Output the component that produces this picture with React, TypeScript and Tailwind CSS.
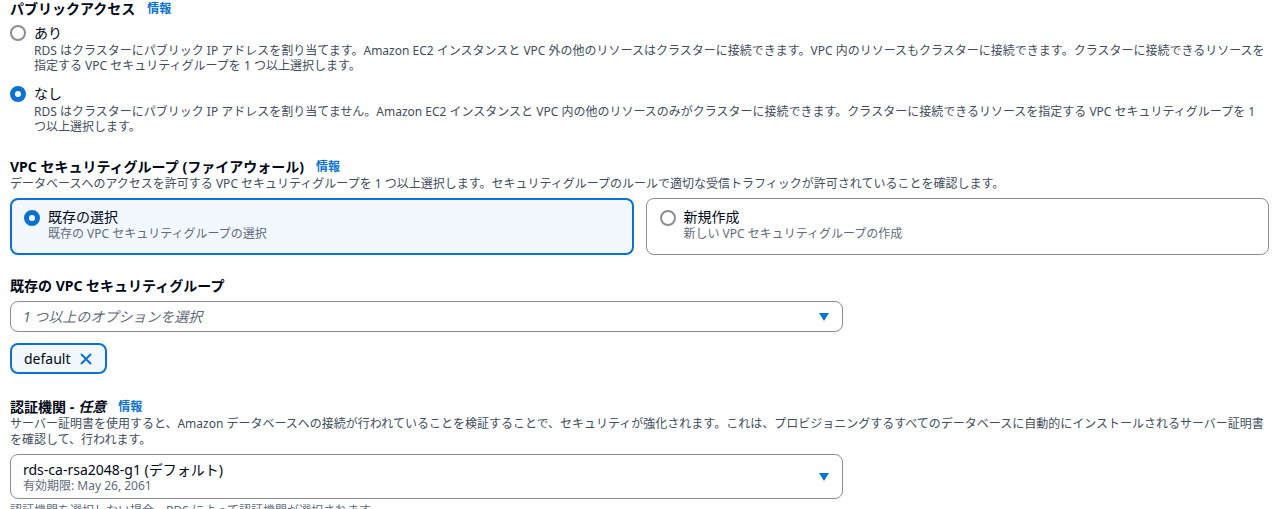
const F = { fontFamily: '"Noto Sans", "Noto Sans CJK JP", sans-serif' };

function Radio({ on }: { on?: boolean }) {
  return on ? (
    <span className="block w-4 h-4 rounded-full border-[5px] border-[#0972d3] bg-white shrink-0" />
  ) : (
    <span className="block w-4 h-4 rounded-full border-2 border-[#8c8c94] bg-white shrink-0" />
  );
}

function Info() {
  return <span className="text-[12px] font-bold text-[#0972d3] ml-3">情報</span>;
}

function Caret() {
  return (
    <svg width="12" height="10" viewBox="0 0 12 10" className="shrink-0">
      <path d="M1 1h10L6 9z" fill="#0972d3" />
    </svg>
  );
}

export default function App() {
  return (
    <div style={F} className="w-[1279px] h-[509px] overflow-hidden bg-white text-[#000716] px-[10px] pt-[1px]">
      <div className="text-[14px] font-bold leading-[16px] flex items-center">パブリックアクセス<Info /></div>
      <div className="mt-[7px] flex items-center gap-[8px] text-[14px] leading-[18px]"><Radio />あり</div>
      <div className="pl-[24px] mt-[1px] text-[12px] leading-[15px] text-[#414d5c]">
        RDS はクラスターにパブリック IP アドレスを割り当てます。Amazon EC2 インスタンスと VPC 外の他のリソースはクラスターに接続できます。VPC 内のリソースもクラスターに接続できます。クラスターに接続できるリソースを指定する VPC セキュリティグループを 1 つ以上選択します。
      </div>
      <div className="mt-[12px] flex items-center gap-[8px] text-[14px] leading-[18px]"><Radio on />なし</div>
      <div className="pl-[24px] mt-[1px] text-[12px] leading-[15px] text-[#414d5c]">
        RDS はクラスターにパブリック IP アドレスを割り当てません。Amazon EC2 インスタンスと VPC 内の他のリソースのみがクラスターに接続できます。クラスターに接続できるリソースを指定する VPC セキュリティグループを 1 つ以上選択します。
      </div>

      <div className="mt-[24px] text-[14px] font-bold leading-[18px] flex items-center">VPC セキュリティグループ (ファイアウォール)<Info /></div>
      <div className="text-[12px] leading-[16px] text-[#414d5c]">データベースへのアクセスを許可する VPC セキュリティグループを 1 つ以上選択します。セキュリティグループのルールで適切な受信トラフィックが許可されていることを確認します。</div>
      <div className="mt-[6px] grid grid-cols-2 gap-[12px] h-[57px]">
        <div className="rounded-[8px] border-2 border-[#0972d3] bg-[#f2f8fd] px-[12px] py-[8px] flex gap-[8px]">
          <div className="pt-[2px]"><Radio on /></div>
          <div>
            <div className="text-[14px] leading-[18px]">既存の選択</div>
            <div className="text-[12px] leading-[16px] text-[#5f6b7a]">既存の VPC セキュリティグループの選択</div>
          </div>
        </div>
        <div className="rounded-[8px] border border-[#8c8c94] px-[13px] py-[9px] flex gap-[8px]">
          <div className="pt-[2px]"><Radio /></div>
          <div>
            <div className="text-[14px] leading-[18px]">新規作成</div>
            <div className="text-[12px] leading-[16px] text-[#5f6b7a]">新しい VPC セキュリティグループの作成</div>
          </div>
        </div>
      </div>

      <div className="mt-[22px] text-[14px] font-bold leading-[18px]">既存の VPC セキュリティグループ</div>
      <div className="mt-[6px] w-[833px] h-[31px] rounded-[8px] border border-[#8c8c94] px-[12px] flex items-center justify-between">
        <span className="italic text-[14px] text-[#5f6b7a]">1 つ以上のオプションを選択</span>
        <Caret />
      </div>
      <div className="mt-[11px] inline-flex items-center gap-[8px] h-[31px] px-[12px] rounded-[8px] border-2 border-[#0972d3] bg-[#f2f8fd] text-[14px]">
        default
        <svg width="14" height="14" viewBox="0 0 14 14"><path d="M2 2l10 10M12 2L2 12" stroke="#0972d3" strokeWidth="2" /></svg>
      </div>

      <div className="mt-[24px] text-[14px] font-bold leading-[18px] flex items-center">認証機関 - <i className="ml-1">任意</i><Info /></div>
      <div className="text-[12px] leading-[16px] text-[#414d5c]">サーバー証明書を使用すると、Amazon データベースへの接続が行われていることを検証することで、セキュリティが強化されます。これは、プロビジョニングするすべてのデータベースに自動的にインストールされるサーバー証明書を確認して、行われます。</div>
      <div className="mt-[6px] w-[833px] h-[45px] rounded-[8px] border border-[#8c8c94] px-[12px] flex items-center justify-between">
        <div>
          <div className="text-[14px] leading-[18px]">rds-ca-rsa2048-g1 (デフォルト)</div>
          <div className="text-[12px] leading-[14px] text-[#5f6b7a]">有効期限: May 26, 2061</div>
        </div>
        <Caret />
      </div>
      <div className="mt-[4px] text-[12px] leading-[16px] text-[#5f6b7a]">認証機関を選択しない場合、RDS によって認証機関が選択されます。</div>
    </div>
  );
}
